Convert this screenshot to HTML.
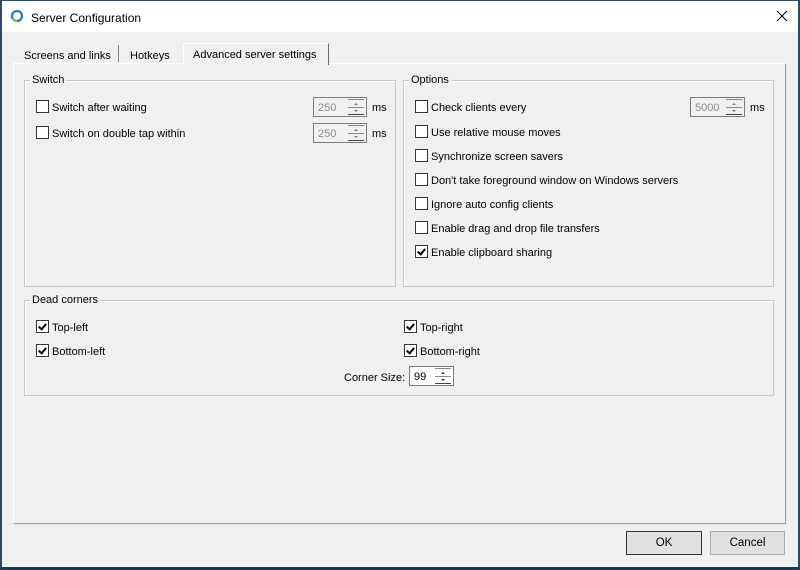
<!DOCTYPE html>
<html><head><meta charset="utf-8"><style>
*{box-sizing:border-box;margin:0;padding:0}
body{width:800px;height:570px;overflow:hidden;background:#f0f0f0;font-family:"Liberation Sans",sans-serif;font-size:11px;color:#000;position:relative}
.a{position:absolute}
.win{left:0;top:0;width:800px;height:570px;border:1px solid #2c4a66;border-bottom:3px solid #1f3650;border-left:2px solid #2c4a66;border-right:2px solid #2c4a66}
.title{left:0;top:0;width:800px;height:32px;background:#fff}
.pane{left:13px;top:63px;width:773px;height:461px;border-left:1px solid #fff;border-top:1px solid #fff;border-right:1px solid #a0a0a0;border-bottom:1px solid #a0a0a0;box-shadow:1px 1px 0 #e3e3e3}
.grp{border:1px solid #c8c8c8;box-shadow:1px 1px 0 #fff inset}
.lg{background:#f0f0f0;padding:0 2px;top:-8px;left:5px;position:absolute;line-height:14px}
.cb{width:13px;height:13px;border:1px solid #333;background:#fff}
.cb.c::after{content:"";position:absolute;left:3px;top:1px;width:3px;height:6px;border:solid #000;border-width:0 2px 2px 0;transform:rotate(40deg)}
.t{line-height:14px;white-space:nowrap;padding-top:1px}
.spin{height:20px;border:1px solid #7a7a7a;background:#f0f0f0;color:#8a8a8a;padding:4px 0 0 4px;line-height:13px}
.spin.en{background:#fff;color:#000}
.arr{position:absolute;right:2px;top:1px;width:16px;height:16px;border-top:1px solid #888;border-bottom:1px solid #444}
.arr::before{content:"";position:absolute;left:0;right:0;top:7px;border-top:1px solid #888}
.arr i{position:absolute;left:6px;width:0;height:0;border-left:2px solid transparent;border-right:2px solid transparent}
.btn{height:24px;border:1px solid #adadad;background:#e1e1e1;text-align:center;line-height:23px;font-size:11.5px}
</style></head><body>
<div class="a title"></div>
<svg class="a" style="left:10px;top:9px" width="14" height="14" viewBox="0 0 14 14"><circle cx="7" cy="7" r="5" fill="none" stroke="#2a7ab8" stroke-width="2.2"/><path d="M2.5 9.5 A5 5 0 0 0 7 12" fill="none" stroke="#8cc63f" stroke-width="2.2"/></svg>
<div class="a t" style="left:31px;top:10px;font-size:12px">Server Configuration</div>
<svg class="a" style="left:776px;top:10px" width="12" height="12" viewBox="0 0 12 12"><path d="M1 1L11 11M11 1L1 11" stroke="#000" stroke-width="1.1"/></svg>
<div class="a win"></div>

<div class="a pane"></div>
<div class="a t" style="left:24px;top:48px">Screens and links</div>
<div class="a" style="left:118px;top:45px;width:1px;height:17px;background:#808080"></div>
<div class="a t" style="left:130px;top:48px">Hotkeys</div>
<div class="a" style="left:183px;top:43px;width:146px;height:22px;background:#f0f0f0;border-left:1px solid #fff;border-top:1px solid #fff;border-right:1px solid #696969"></div>
<div class="a t" style="left:193px;top:47px">Advanced server settings</div>

<div class="a grp" style="left:24px;top:80px;width:372px;height:207px"><span class="lg">Switch</span></div>
<div class="a cb" style="left:36px;top:100px"></div><div class="a t" style="left:52px;top:100px">Switch after waiting</div>
<div class="a spin" style="left:313px;top:97px;width:54px">250<div class="arr"><i style="top:3px;border-bottom:2px solid #777"></i><i style="top:10px;border-top:2px solid #777"></i></div></div>
<div class="a t" style="left:372px;top:100px">ms</div>
<div class="a cb" style="left:36px;top:126px"></div><div class="a t" style="left:52px;top:126px">Switch on double tap within</div>
<div class="a spin" style="left:313px;top:123px;width:54px">250<div class="arr"><i style="top:3px;border-bottom:2px solid #777"></i><i style="top:10px;border-top:2px solid #777"></i></div></div>
<div class="a t" style="left:372px;top:126px">ms</div>

<div class="a grp" style="left:403px;top:80px;width:371px;height:207px"><span class="lg">Options</span></div>
<div class="a cb" style="left:415px;top:100px"></div><div class="a t" style="left:431px;top:100px">Check clients every</div>
<div class="a spin" style="left:690px;top:97px;width:55px">5000<div class="arr"><i style="top:3px;border-bottom:2px solid #777"></i><i style="top:10px;border-top:2px solid #777"></i></div></div>
<div class="a t" style="left:750px;top:100px">ms</div>
<div class="a cb" style="left:415px;top:125px"></div><div class="a t" style="left:431px;top:125px">Use relative mouse moves</div>
<div class="a cb" style="left:415px;top:149px"></div><div class="a t" style="left:431px;top:149px">Synchronize screen savers</div>
<div class="a cb" style="left:415px;top:173px"></div><div class="a t" style="left:431px;top:173px">Don't take foreground window on Windows servers</div>
<div class="a cb" style="left:415px;top:197px"></div><div class="a t" style="left:431px;top:197px">Ignore auto config clients</div>
<div class="a cb" style="left:415px;top:221px"></div><div class="a t" style="left:431px;top:221px">Enable drag and drop file transfers</div>
<div class="a cb c" style="left:415px;top:245px"></div><div class="a t" style="left:431px;top:245px">Enable clipboard sharing</div>

<div class="a grp" style="left:24px;top:300px;width:750px;height:96px"><span class="lg">Dead corners</span></div>
<div class="a cb c" style="left:36px;top:320px"></div><div class="a t" style="left:52px;top:320px">Top-left</div>
<div class="a cb c" style="left:36px;top:344px"></div><div class="a t" style="left:52px;top:344px">Bottom-left</div>
<div class="a cb c" style="left:404px;top:320px"></div><div class="a t" style="left:420px;top:320px">Top-right</div>
<div class="a cb c" style="left:404px;top:344px"></div><div class="a t" style="left:420px;top:344px">Bottom-right</div>
<div class="a t" style="left:344px;top:370px">Corner Size:</div>
<div class="a spin en" style="left:409px;top:366px;width:45px">99<div class="arr"><i style="top:3px;border-bottom:2px solid #333"></i><i style="top:10px;border-top:2px solid #333"></i></div></div>

<div class="a btn" style="left:626px;top:531px;width:76px;border:1px solid #333;box-shadow:inset 0 0 0 1px #e1e1e1">OK</div>
<div class="a btn" style="left:710px;top:531px;width:75px">Cancel</div>
</body></html>
